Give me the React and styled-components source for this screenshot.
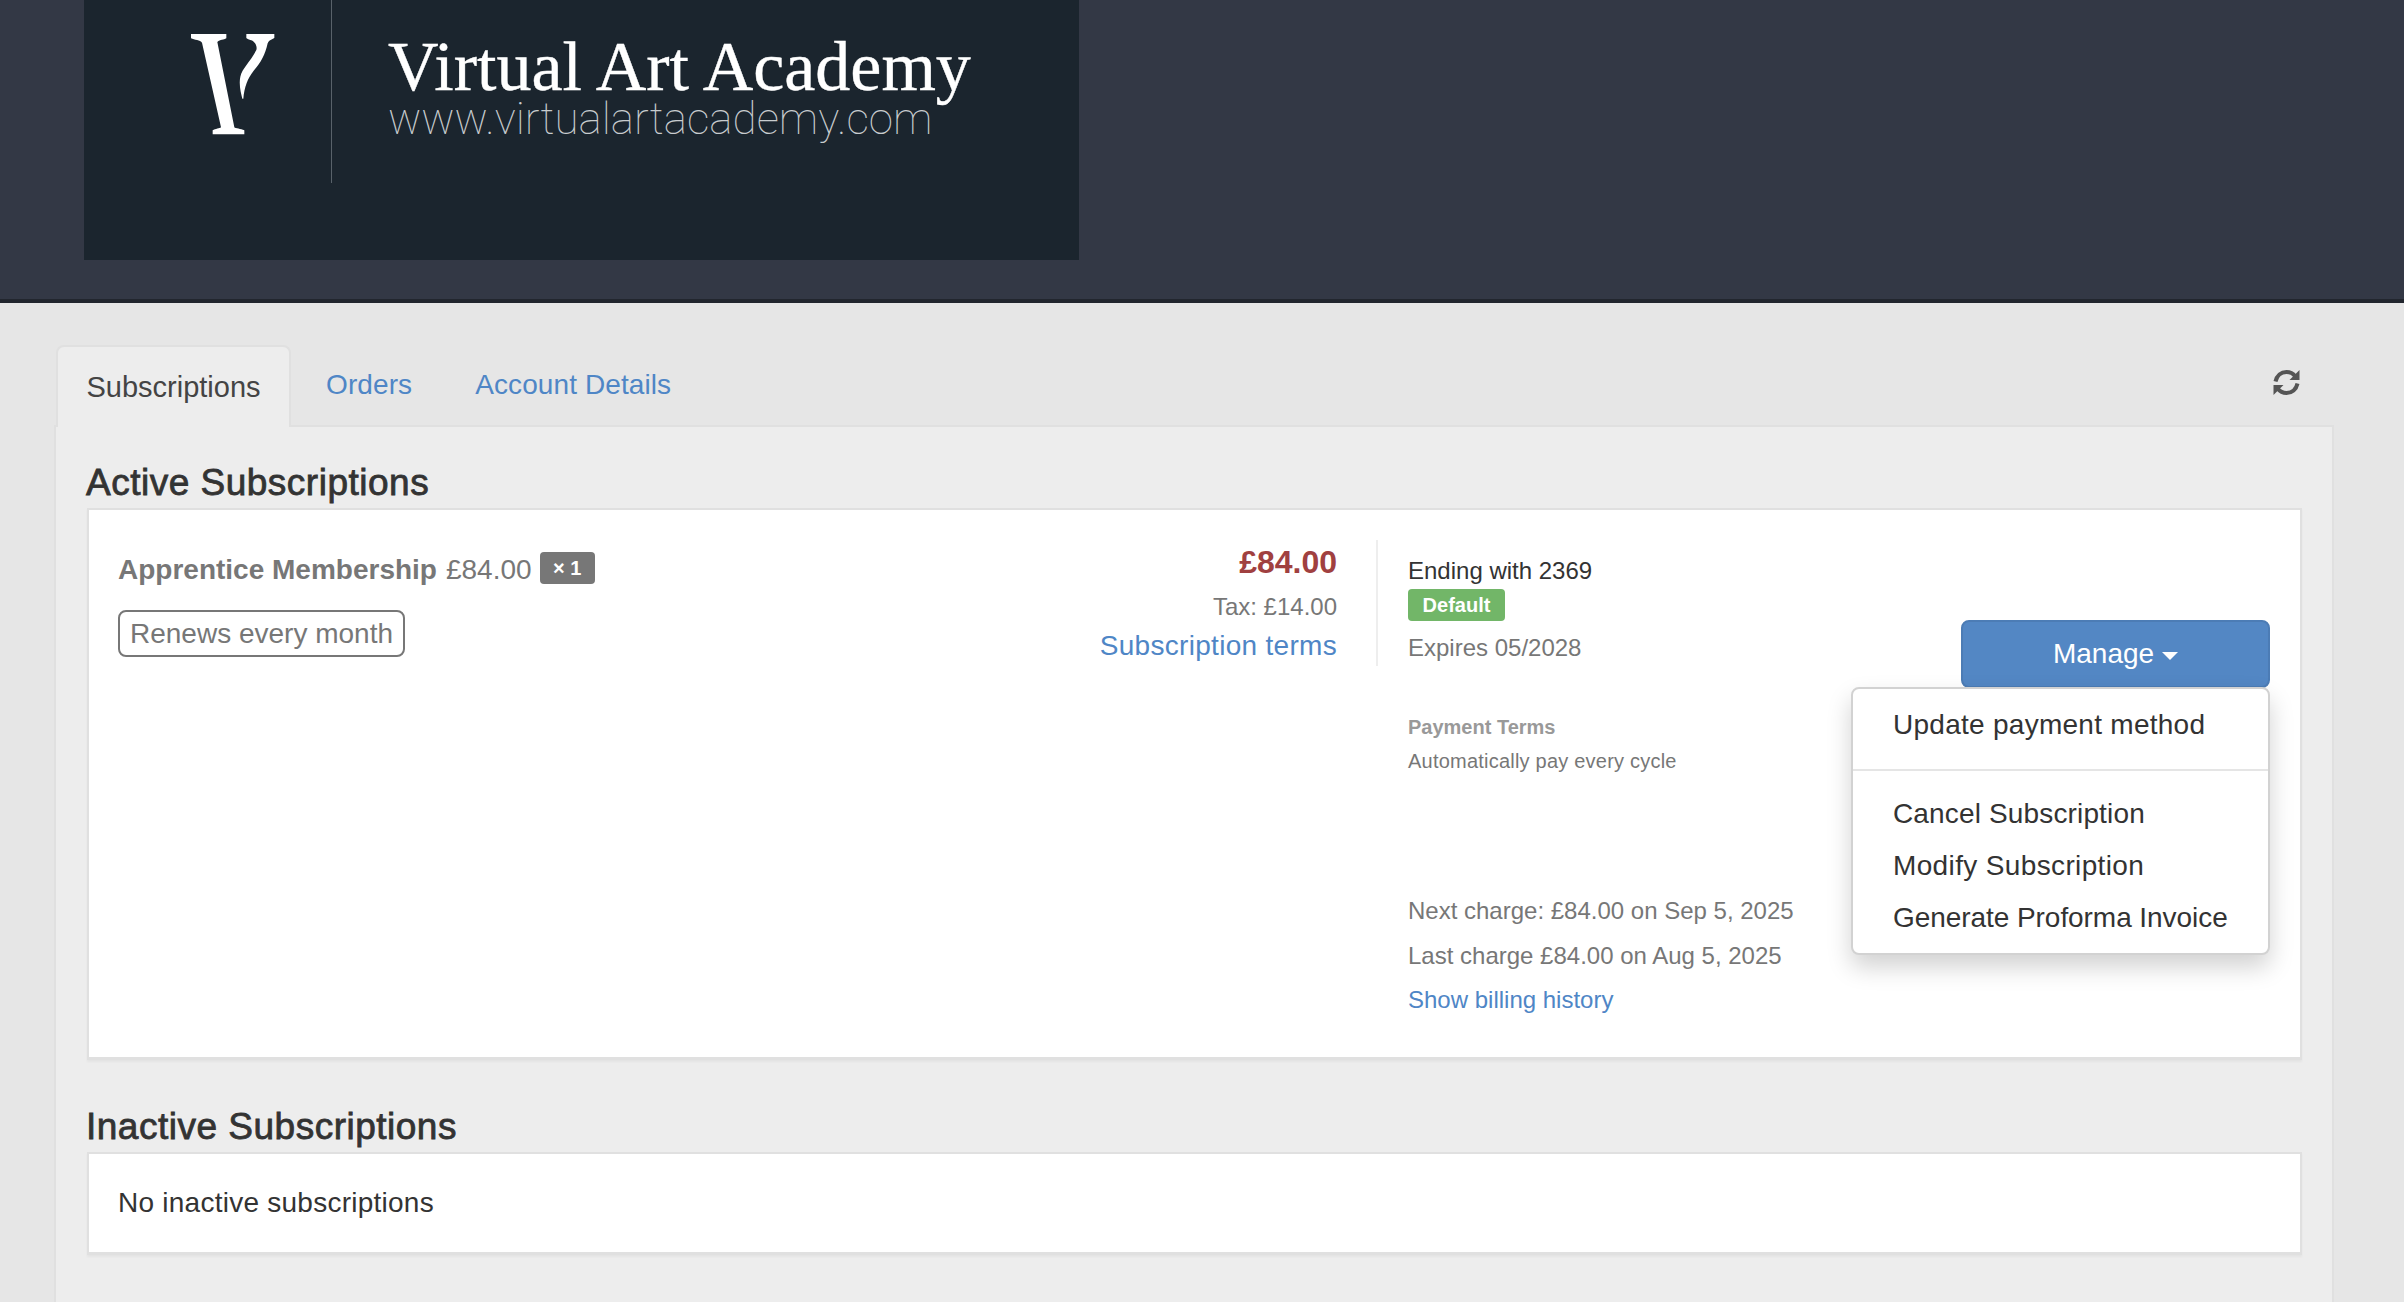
import React from 'react';
import styled, { createGlobalStyle } from 'styled-components';

const Global = createGlobalStyle`
  html, body { margin: 0; padding: 0; background: #e6e6e6; height: 1302px; overflow: hidden; }
  body { font-family: "Liberation Sans", Arial, sans-serif; font-size: 28px; color: #333; }
  * { box-sizing: border-box; }
`;

const Header = styled.header`
  height: 303px;
  background: #333845;
  border-bottom: 4px solid #22262e;
  padding-left: 84px;
`;
const Banner = styled.div`
  width: 995px;
  height: 260px;
  background: #1b252e;
  display: flex;
  align-items: flex-start;
`;
const LogoMark = styled.svg`
  width: 84px;
  height: 101px;
  margin: 34px 0 0 107px;
  flex: none;
`;
const LogoRule = styled.div`
  width: 1px;
  height: 183px;
  background: #59626a;
  margin-left: 56px;
  flex: none;
`;
const LogoText = styled.div`
  margin-left: 56px;
  display: flex;
  flex-direction: column;
`;
const LogoTitle = styled.div`
  font-family: "Liberation Serif", serif;
  font-size: 70px;
  line-height: 70px;
  margin-top: 32px;
  color: #fff;
  -webkit-text-stroke: 0.4px #fff;
  white-space: nowrap;
`;
const LogoUrl = styled.div`
  font-family: Roboto, "Liberation Sans", sans-serif;
  font-weight: 100;
  font-size: 44px;
  line-height: 46px;
  margin-top: -6px;
  color: #c8ccce;
  white-space: nowrap;
`;
const Main = styled.main`
  padding: 42px 70px 0 54px;
`;
const TabBar = styled.nav`
  display: flex;
  height: 80px;
  padding-left: 2px;
  align-items: stretch;
`;
const ActiveTab = styled.div`
  width: 235px;
  background: #ededed;
  border: 2px solid #e0e0e0;
  border-bottom: 0;
  border-radius: 8px 8px 0 0;
  display: flex;
  align-items: center;
  justify-content: center;
  font-size: 29px;
  color: #444;
  margin-bottom: -2px;
  z-index: 1;
`;
const TabLink = styled.a`
  color: #4f86c6;
  display: flex;
  align-items: center;
  margin-left: ${p => p.$gap}px;
  letter-spacing: 0.1px;
`;
const RefreshBtn = styled.div`
  margin-left: auto;
  margin-right: 34px;
  padding-top: 24px;
  color: #555;
  svg { display: block; }
`;
const Panel = styled.section`
  background: #ededed;
  border: 2px solid #e0e0e0;
  border-bottom: 0;
  padding: 31px 30px 0 31px;
  height: 880px;
`;
const SectionTitle = styled.h2`
  font-size: 37px;
  font-weight: 400;
  letter-spacing: 0.5px;
  -webkit-text-stroke: 0.8px #333;
  line-height: 50px;
  margin: ${p => p.$mt || 0}px 0 0 -1px;
  color: #333;
`;
const Card = styled.div`
  background: #fff;
  border: 2px solid #e0e0e0;
  border-bottom-width: 3px;
  box-shadow: 0 2px 2px rgba(0,0,0,.04);
  height: ${p => p.$h}px;
`;
const Row = styled.div`
  display: flex;
  padding: 30px 30px 0 29px;
  height: 100%;
`;
const ItemCol = styled.div`
  flex: 1;
`;
const ItemTitle = styled.div`
  display: flex;
  align-items: center;
  height: 46px;
  margin-top: 7px;
  color: #777;
`;
const ItemName = styled.strong`
  font-weight: 700;
`;
const ItemPrice = styled.span`
  margin-left: 9px;
`;
const Qty = styled.span`
  margin: 0 0 4px 8px;
  background: #777;
  color: #fff;
  font-size: 20px;
  font-weight: 700;
  border-radius: 4px;
  width: 55px;
  height: 32px;
  display: flex;
  align-items: center;
  justify-content: center;
`;
const Pill = styled.div`
  display: inline-block;
  margin-top: 17px;
  border: 2px solid #777;
  border-radius: 8px;
  color: #777;
  height: 47px;
  line-height: 43px;
  padding: 0 10px;
`;
const PriceCol = styled.div`
  width: 260px;
  margin-right: 39px;
  display: flex;
  flex-direction: column;
  align-items: flex-end;
`;
const Price = styled.div`
  color: #a04040;
  font-size: 32px;
  font-weight: 700;
  line-height: 40px;
  margin-top: 2px;
`;
const Tax = styled.div`
  color: #777;
  font-size: 24px;
  line-height: 32px;
  margin-top: 9px;
`;
const TermsLink = styled.a`
  color: #4f86c6;
  line-height: 40px;
  margin-top: 3px;
  letter-spacing: 0.3px;
  white-space: nowrap;
`;
const PayCol = styled.div`
  width: 894px;
  flex: none;
  display: flex;
  justify-content: space-between;
`;
const PayDetails = styled.div`
  min-width: 0;
`;
const PaySummary = styled.div`
  border-left: 2px solid #eee;
  padding-left: 30px;
  height: 126px;
`;
const PayExtra = styled.div`
  padding-left: 32px;
`;
const Ending = styled.div`
  font-size: 24px;
  line-height: 30px;
  padding-top: 16px;
  height: 46px;
  color: #333;
`;
const DefaultBadge = styled.span`
  display: flex;
  align-items: center;
  justify-content: center;
  width: 97px;
  height: 32px;
  margin-top: 3px;
  background: #72b668;
  color: #fff;
  border-radius: 4px;
  font-size: 20px;
  font-weight: 700;
`;
const Muted = styled.div`
  font-size: 24px;
  line-height: 30px;
  color: #777;
  margin-top: ${p => p.$mt || 0}px;
  white-space: nowrap;
`;
const TermsHead = styled.div`
  font-size: 20px;
  font-weight: 700;
  line-height: 28px;
  color: #999;
  margin-top: 47px;
`;
const TermsBody = styled.div`
  font-size: 20px;
  line-height: 28px;
  color: #777;
  margin-top: 6px;
  letter-spacing: 0.22px;
  white-space: nowrap;
`;
const BillingLink = styled.a`
  display: block;
  font-size: 24px;
  line-height: 30px;
  color: #4f86c6;
  margin-top: 14px;
  white-space: nowrap;
`;
const Actions = styled.div`
  position: relative;
  width: 309px;
  margin-top: 80px;
  flex: none;
`;
const ManageButton = styled.button`
  width: 309px;
  height: 68px;
  background: #5387c4;
  color: #fff;
  border: 2px solid #4c7cb5;
  border-radius: 8px;
  font: inherit;
  display: flex;
  align-items: center;
  justify-content: center;
  gap: 8px;
`;
const Caret = styled.span`
  width: 0;
  height: 0;
  border-left: 8px solid transparent;
  border-right: 8px solid transparent;
  border-top: 8px solid #fff;
  margin-top: 4px;
`;
const Menu = styled.div`
  position: absolute;
  right: 0;
  top: 67px;
  width: 419px;
  height: 268px;
  background: #fff;
  border: 2px solid #d2d2d2;
  border-radius: 8px;
  box-shadow: 0 12px 24px rgba(0,0,0,.18);
  padding-top: 10px;
`;
const MenuItem = styled.div`
  height: 52px;
  line-height: 52px;
  padding-left: 40px;
  color: #333;
  letter-spacing: ${p => p.$track}px;
  white-space: nowrap;
`;
const MenuDivider = styled.div`
  height: 2px;
  background: #e5e5e5;
  margin: 18px 0 17px;
`;
const EmptyText = styled.div`
  padding: 29px 29px 0;
  line-height: 40px;
  letter-spacing: 0.25px;
  color: #333;
`;

const RefreshIcon = () => (
  <svg width="27" height="27" viewBox="0 0 27 27" fill="currentColor">
    <path d="M2.500 12.500C3.800 6.600 8 3 13.500 3c3.600 0 6.600 1.500 8.700 4.200" fill="none" stroke="currentColor" strokeWidth="4" />
    <path d="M26.500 1v10h-10z" />
    <path d="M24.500 14.500C23.200 20.400 19 24 13.500 24c-3.600 0-6.600-1.500-8.700-4.200" fill="none" stroke="currentColor" strokeWidth="4" />
    <path d="M.5 26V16h10z" />
  </svg>
);

const VMark = () => (
  <LogoMark viewBox="62 42 252 303" fill="#fff">
    <path d="M62 42H168V55C160 60 150 58 141 66L192 322C195 326 212 326 222 331V343H127V331C135 326 148 326 152 322L95 68C90 60 72 60 62 55Z" />
    <path d="M228 42H312V54C305 58 296 60 292 70C284 105 272 128 250 152C232 175 222 200 219 236H216C212 220 205 195 210 170C215 145 240 125 258 90C262 78 252 62 240 60C234 58 230 56 228 54Z" />
  </LogoMark>
);

export default function App() {
  return (
    <>
      <Global />
      <Header>
        <Banner>
          <VMark />
          <LogoRule />
          <LogoText>
            <LogoTitle>Virtual Art Academy</LogoTitle>
            <LogoUrl>www.virtualartacademy.com</LogoUrl>
          </LogoText>
        </Banner>
      </Header>
      <Main>
        <TabBar>
          <ActiveTab>Subscriptions</ActiveTab>
          <TabLink $gap={35}>Orders</TabLink>
          <TabLink $gap={63}>Account Details</TabLink>
          <RefreshBtn><RefreshIcon /></RefreshBtn>
        </TabBar>
        <Panel>
          <SectionTitle>Active Subscriptions</SectionTitle>
          <Card $h={552}>
            <Row>
              <ItemCol>
                <ItemTitle>
                  <ItemName>Apprentice Membership</ItemName>
                  <ItemPrice>£84.00</ItemPrice>
                  <Qty>× 1</Qty>
                </ItemTitle>
                <Pill>Renews every month</Pill>
              </ItemCol>
              <PriceCol>
                <Price>£84.00</Price>
                <Tax>Tax: £14.00</Tax>
                <TermsLink>Subscription terms</TermsLink>
              </PriceCol>
              <PayCol>
                <PayDetails>
                  <PaySummary>
                    <Ending>Ending with 2369</Ending>
                    <DefaultBadge>Default</DefaultBadge>
                    <Muted $mt={12}>Expires 05/2028</Muted>
                  </PaySummary>
                  <PayExtra>
                    <TermsHead>Payment Terms</TermsHead>
                    <TermsBody>Automatically pay every cycle</TermsBody>
                    <Muted $mt={121}>Next charge: £84.00 on Sep 5, 2025</Muted>
                    <Muted $mt={15}>Last charge £84.00 on Aug 5, 2025</Muted>
                    <BillingLink>Show billing history</BillingLink>
                  </PayExtra>
                </PayDetails>
                <Actions>
                  <ManageButton>Manage <Caret /></ManageButton>
                  <Menu>
                    <MenuItem $track={0.27}>Update payment method</MenuItem>
                    <MenuDivider />
                    <MenuItem $track={0.15}>Cancel Subscription</MenuItem>
                    <MenuItem $track={0.36}>Modify Subscription</MenuItem>
                    <MenuItem $track={-0.06}>Generate Proforma Invoice</MenuItem>
                  </Menu>
                </Actions>
              </PayCol>
            </Row>
          </Card>
          <SectionTitle $mt={42}>Inactive Subscriptions</SectionTitle>
          <Card $h={103}>
            <EmptyText>No inactive subscriptions</EmptyText>
          </Card>
        </Panel>
      </Main>
    </>
  );
}
